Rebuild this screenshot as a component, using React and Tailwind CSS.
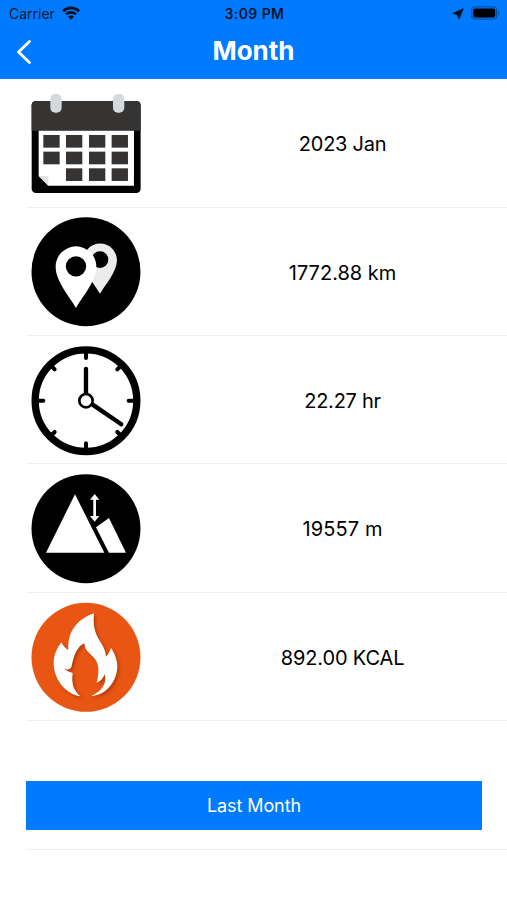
import React from 'react';

const CalendarIcon = () => (
    <svg viewBox="33 10 328 328" className="w-[109.3px] h-[109.3px] overflow-visible">
        <rect x="35" y="46" width="327" height="276" rx="13" fill="#000" />
        <path d="M35 135V59a13 13 0 0 1 13-13H349a13 13 0 0 1 13 13V135Z" fill="#363433" />
        <path d="M56 135H342V300H85L56 271Z" fill="#fff" />
        <path d="M56 271H85V300Z" fill="#dfe1e4" />
        <rect x="91" y="25" width="34" height="56" rx="15" fill="#d5d9dc" />
        <rect x="279" y="25" width="34" height="56" rx="15" fill="#d5d9dc" />
        <g fill="#363433">
            <rect x="70" y="148" width="49" height="38" />
            <rect x="138" y="148" width="49" height="38" />
            <rect x="207" y="148" width="49" height="38" />
            <rect x="275" y="148" width="49" height="38" />
            <rect x="70" y="198" width="49" height="38" />
            <rect x="138" y="198" width="49" height="38" />
            <rect x="207" y="198" width="49" height="38" />
            <rect x="275" y="198" width="49" height="38" />
            <rect x="138" y="248" width="49" height="38" />
            <rect x="207" y="248" width="49" height="38" />
            <rect x="275" y="248" width="49" height="38" />
        </g>
    </svg>
);

const DistanceIcon = () => (
    <svg viewBox="33 21 328 328" className="w-[109.3px] h-[109.3px] overflow-visible">
        <circle cx="198" cy="185" r="163.5" fill="#000" />
        <path d="M240 251C225 226 190 184 190 151a50 50 0 0 1 101 0C291 184 257 224 240 251Z" fill="#ececec" />
        <circle cx="240" cy="149" r="25" fill="#000" />
        <path d="M168 294C151 262 107 215 107 170a61 61 0 0 1 122 0C229 215 185 262 168 294Z" fill="#fff" />
        <circle cx="168" cy="169" r="30.5" fill="#000" />
    </svg>
);

const ClockIcon = () => (
    <svg viewBox="33 23 328 328" className="w-[109.3px] h-[109.3px] overflow-visible" fill="none" stroke="#000" strokeWidth="12" strokeLinecap="round">
        <circle cx="198" cy="187" r="152.5" strokeWidth="22" />
        <path d="M198 40V59M198 334V315M51 187H70M345 187H326" />
        <path d="M94 83L104 93M302 83L292 93M94 291L104 281M302 291L292 281" />
        <path d="M198 92V164M218 199L304 258" strokeWidth="13" />
        <circle cx="198" cy="187" r="20" strokeWidth="8" />
    </svg>
);

const ClimbIcon = () => (
    <svg viewBox="33 23 328 328" className="w-[109.3px] h-[109.3px] overflow-visible" fill="#fff">
        <circle cx="198" cy="187" r="163.5" fill="#000" />
        <path d="M165 84L253 259H78Z" />
        <path d="M228 183L267 155L318 259H267Z" />
        <path d="M224 83L238 100H228V149H238L224 166L210 149H220V100H210Z" />
    </svg>
);

const CaloriesIcon = () => (
    <svg viewBox="33 32 328 328" className="w-[109.3px] h-[109.3px] overflow-visible">
        <circle cx="198" cy="195" r="163.5" fill="#e95513" />
        <path
            className="drop-shadow-[6px_6px_5px_rgba(130,40,0,0.5)]"
            d="M222 63C182 76 141 111 145 173C136 168 129 160 124 150C113 165 102 184 101 211C101 258 132 302 181 312C160 294 154 272 158 242C145 238 136 234 130 227C143 235 150 233 155 222C161 190 172 162 193 153C195 188 231 186 235 227C236 240 234 255 230 271C242 267 250 258 254 246C263 273 244 298 214 311C258 309 290 269 292 225C293 204 284 183 273 167C270 178 265 186 258 193C256 147 214 142 222 63Z"
            fill="#fff"
        />
    </svg>
);

const STATS = [
    { id: 'month', value: '2023 Jan', icon: CalendarIcon, tracking: 'tracking-[-0.25px]' },
    { id: 'distance', value: '1772.88 km', icon: DistanceIcon, tracking: 'tracking-normal' },
    { id: 'time', value: '22.27 hr', icon: ClockIcon, tracking: 'tracking-[-0.25px]' },
    { id: 'climb', value: '19557 m', icon: ClimbIcon, tracking: 'tracking-[0.1px]' },
    { id: 'calories', value: '892.00 KCAL', icon: CaloriesIcon, tracking: 'tracking-[-0.15px]' },
];

const StatusBar = () => (
    <div className="grid grid-cols-3 items-center h-[27px] pl-[9px] pr-[7px] text-[14px] text-black/85">
        <div className="flex items-center gap-[7px]">
            <span>Carrier</span>
            <svg viewBox="0 0 18 14" className="w-[18px] h-[14px] mb-px" fill="none" stroke="#00101f" strokeWidth="2.7">
                <path d="M1 5.2C5.5 0.7 12.5 0.7 17 5.2" />
                <path d="M4 8.4C6.8 5.6 11.2 5.6 14 8.4" />
                <path d="M9 13.7L6 10.7C7.7 9.1 10.3 9.1 12 10.7Z" fill="#00101f" stroke="none" />
            </svg>
        </div>
        <span className="text-center font-semibold whitespace-nowrap tracking-[0.4px]">3:09 PM</span>
        <div className="flex items-center justify-end gap-[7px]">
            <svg viewBox="0 0 12 12" className="w-[12px] h-[12px]" fill="#00101f" stroke="#00101f" strokeWidth="0.8" strokeLinejoin="round">
                <path d="M11.2 0.8L7 11L5.4 6.8L0.8 5.4Z" />
            </svg>
            <svg viewBox="0 0 29 14" className="w-[29px] h-[14px] mb-px">
                <rect x="0.7" y="0.9" width="25" height="12.2" rx="3.5" fill="none" stroke="#0050a5" strokeWidth="1.2" />
                <rect x="2.2" y="2.5" width="22" height="9" rx="2" fill="#000" />
                <path d="M27 5V9C28.6 8.4 28.6 5.6 27 5Z" fill="#0050a5" />
            </svg>
        </div>
    </div>
);

const App = () => {
    return (
        <div className="w-full min-h-[900px] bg-white overflow-hidden font-['Inter','Liberation_Sans',sans-serif]">
            {/* Header */}
            <header className="h-[79.2px] bg-[#007aff]">
                <StatusBar />
                <div className="grid grid-cols-[1fr_auto_1fr] items-center h-[48px] px-4">
                    <button type="button" aria-label="Back" className="justify-self-start">
                        <svg viewBox="0 0 16 26" className="w-[16px] h-[26px] mt-[2px]" fill="none" stroke="#fff" strokeWidth="2.8" strokeLinecap="round" strokeLinejoin="round">
                            <path d="M13.5 2.5L2.5 13L13.5 23.5" />
                        </svg>
                    </button>
                    <h1 className="text-[26px] leading-none font-bold text-white">Month</h1>
                </div>
            </header>

            {/* Monthly stats */}
            <ul className="pl-[26px]">
                {STATS.map((stat) => {
                    const Icon = stat.icon;
                    return (
                        <li key={stat.id} className="flex items-center h-[128.4px] pt-[1.6px] pl-[5.3px] border-b border-[#efeff0]">
                            <Icon />
                            <span className={`flex-1 pt-px pl-[37.5px] text-center text-[20px] text-black ${stat.tracking}`}>{stat.value}</span>
                        </li>
                    );
                })}
                <li className="flex items-end h-[128.4px] pr-[25px] pb-[19px] border-b border-[#efeff0]">
                    <button type="button" className="w-full h-[49px] pt-px bg-[#007aff] text-[18px] tracking-[-0.1px] text-white">
                        Last Month
                    </button>
                </li>
            </ul>
        </div>
    );
};

export default App;
